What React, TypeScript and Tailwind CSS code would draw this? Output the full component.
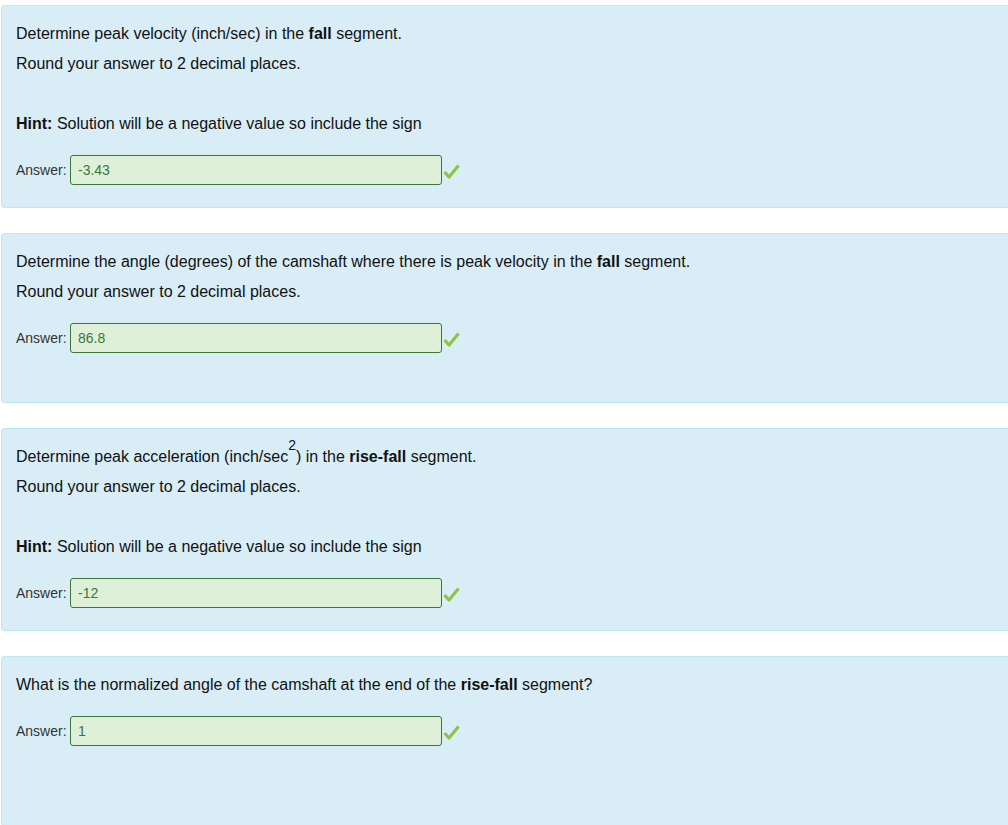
import React from "react";

function Check() {
  return (
    <svg width="17" height="16" viewBox="0 0 17 16" className="ml-[1px] mt-[4px]">
      <path d="M1.5 8 L6 13 L15.5 1.5" fill="none" stroke="#8cc63f" strokeWidth="3.2" strokeLinejoin="round" />
    </svg>
  );
}

function AnswerRow({ value }: { value: string }) {
  return (
    <div className="mt-[21px] flex items-center h-[30px]">
      <span className="text-[14px] text-[#333] w-[54px]">Answer:</span>
      <div className="w-[372px] h-[30px] rounded-[3px] border border-[#3c763d] bg-[#dff0d8] flex items-center px-[7px] text-[14px] text-[#3c763d]">
        {value}
      </div>
      <Check />
    </div>
  );
}

function Panel({ children }: { children: React.ReactNode }) {
  return (
    <div className="min-h-[170px] mb-[25px] bg-[#d9edf7] border border-r-0 border-[#bce8f1] rounded-l-[4px] pl-[14px] pt-[18px] pb-[22px]">
      {children}
    </div>
  );
}

function Hint() {
  return (
    <p className="mt-[40px] leading-5">
      <b>Hint:</b> Solution will be a negative value so include the sign
    </p>
  );
}

export default function App() {
  return (
    <div
      className="pl-[1px] pt-[5px] bg-white text-[16px] text-[#111] overflow-hidden h-[825px]"
      style={{ fontFamily: '"Liberation Sans", Arial, sans-serif' }}
    >
      <Panel>
        <p className="leading-5">
          Determine peak velocity (inch/sec) in the <b>fall</b> segment.
        </p>
        <p className="leading-5 mt-[10px]">Round your answer to 2 decimal places.</p>
        <Hint />
        <AnswerRow value="-3.43" />
      </Panel>

      <Panel>
        <p className="leading-5">
          Determine the angle (degrees) of the camshaft where there is peak velocity in the <b>fall</b> segment.
        </p>
        <p className="leading-5 mt-[10px]">Round your answer to 2 decimal places.</p>
        <AnswerRow value="86.8" />
      </Panel>

      <Panel>
        <p className="leading-5">
          Determine peak acceleration (inch/sec
          <span className="relative -top-[12px] text-[14px] leading-none">2</span>
          ) in the <b>rise-fall</b> segment.
        </p>
        <p className="leading-5 mt-[10px]">Round your answer to 2 decimal places.</p>
        <Hint />
        <AnswerRow value="-12" />
      </Panel>

      <Panel>
        <p className="leading-5">
          What is the normalized angle of the camshaft at the end of the <b>rise-fall</b> segment?
        </p>
        <AnswerRow value="1" />
      </Panel>
    </div>
  );
}
